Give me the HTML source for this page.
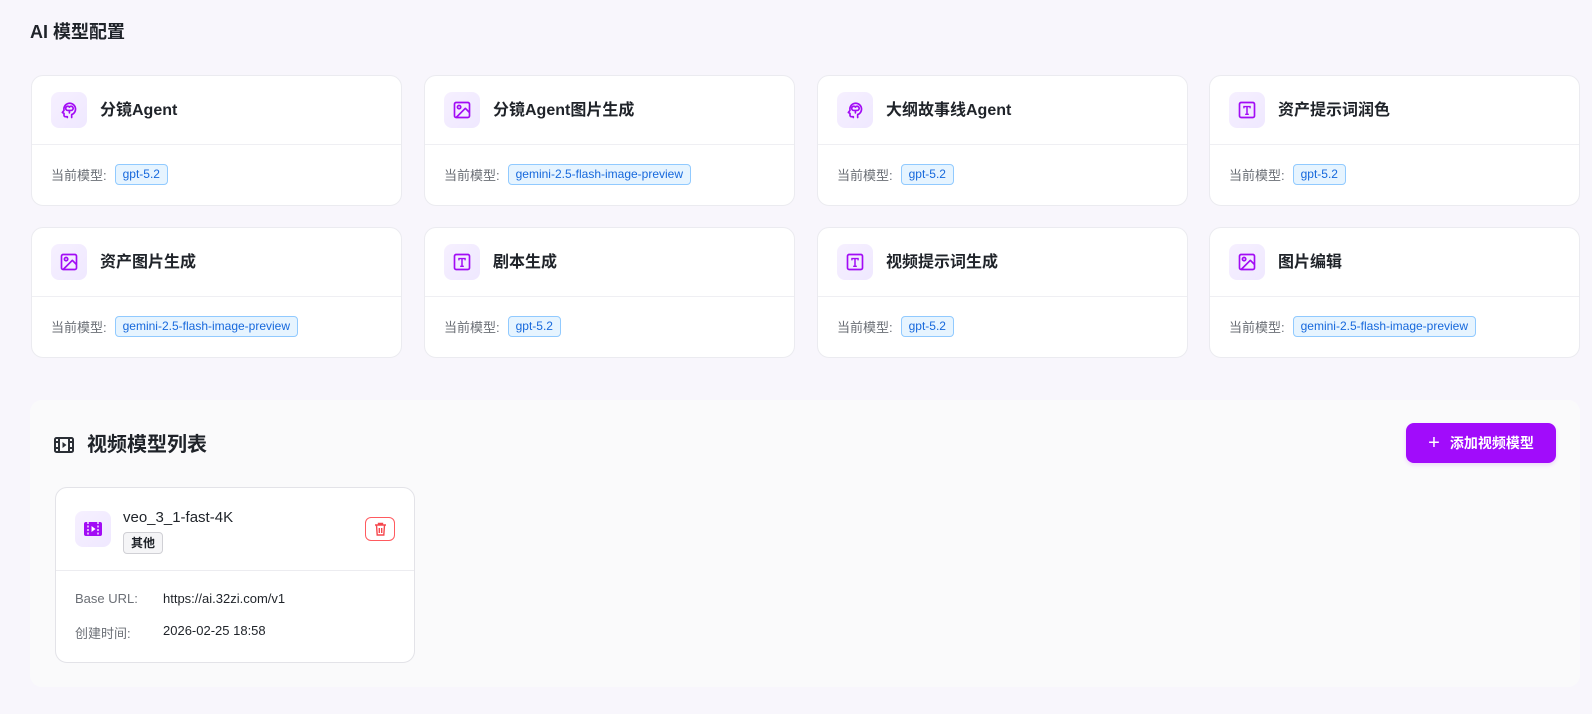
<!DOCTYPE html>
<html><head><meta charset="utf-8"><style>
*{box-sizing:border-box;margin:0;padding:0}
body{width:1592px;height:714px;background:#f8f6fc;font-family:"Liberation Sans","Noto Sans CJK SC",sans-serif;color:#1f2329;position:relative;overflow:hidden}
h1{position:absolute;left:30px;top:20px;font-size:18px;font-weight:700;line-height:24px}
.card{position:absolute;width:371px;height:131px;background:#fff;border:1px solid #ebebf0;border-radius:12px}
.hd{height:69px;border-bottom:1px solid #efeff3;position:relative}
.ic{position:absolute;left:19px;top:16px;width:36px;height:36px;border-radius:8px;background:linear-gradient(135deg,#f6f0ff,#efe8ff);display:flex;align-items:center;justify-content:center}
.tt{position:absolute;left:68px;top:24px;font-size:16px;font-weight:700;line-height:22px}
.ft{position:absolute;left:19px;top:88px;font-size:13px;color:#6b6f76;display:flex;align-items:center}
.tag{margin-left:8px;border:1px solid #91caff;background:#e6f4ff;color:#1668dc;font-size:12px;border-radius:4px;padding:0 7px;height:21px;line-height:19px}
.panel{position:absolute;left:30px;top:400px;width:1550px;height:287px;background:#fafafb;border-radius:12px}
</style></head><body>
<h1>AI 模型配置</h1>

<svg width="0" height="0" style="position:absolute"><defs>
<symbol id="brain" viewBox="0 0 24 24"><g fill="none" stroke="#a20cf5" stroke-width="2" stroke-linecap="round" stroke-linejoin="round"><path d="M15.2 21v-3.5a7 7 0 1 0-9.2-5.1L4 15l2 1v2.5a1.5 1.5 0 0 0 1.5 1.5H10v1"/><path d="M10.5 12.5a2.5 2.5 0 1 1 2-4 2.5 2.5 0 1 1 2 4h-4zM12.5 12.5v3"/></g></symbol>
<symbol id="img" viewBox="0 0 24 24"><g fill="none" stroke="#a20cf5" stroke-width="2" stroke-linejoin="round"><rect x="3" y="3" width="18" height="18" rx="2"/><circle cx="8.5" cy="8.5" r="2"/><path d="M21 15l-5-5L5 21"/></g></symbol>
<symbol id="txt" viewBox="0 0 24 24"><g fill="none" stroke="#a20cf5" stroke-width="2"><rect x="3" y="3" width="18" height="18" rx="2"/></g><path d="M7.5 7h9v3h-1.6V8.7h-2v7.6h1.3V18H9.8v-1.7h1.3V8.7h-2V10H7.5z" fill="#a20cf5"/></symbol>
</defs></svg>

<div class="card" style="left:31px;top:75px"><div class="hd"><div class="ic"><svg width="20" height="20"><use href="#brain"/></svg></div><div class="tt">分镜Agent</div></div><div class="ft">当前模型:<span class="tag">gpt-5.2</span></div></div>
<div class="card" style="left:424px;top:75px"><div class="hd"><div class="ic"><svg width="20" height="20"><use href="#img"/></svg></div><div class="tt">分镜Agent图片生成</div></div><div class="ft">当前模型:<span class="tag">gemini-2.5-flash-image-preview</span></div></div>
<div class="card" style="left:817px;top:75px"><div class="hd"><div class="ic"><svg width="20" height="20"><use href="#brain"/></svg></div><div class="tt">大纲故事线Agent</div></div><div class="ft">当前模型:<span class="tag">gpt-5.2</span></div></div>
<div class="card" style="left:1209px;top:75px"><div class="hd"><div class="ic"><svg width="20" height="20"><use href="#txt"/></svg></div><div class="tt">资产提示词润色</div></div><div class="ft">当前模型:<span class="tag">gpt-5.2</span></div></div>

<div class="card" style="left:31px;top:227px"><div class="hd"><div class="ic"><svg width="20" height="20"><use href="#img"/></svg></div><div class="tt">资产图片生成</div></div><div class="ft">当前模型:<span class="tag">gemini-2.5-flash-image-preview</span></div></div>
<div class="card" style="left:424px;top:227px"><div class="hd"><div class="ic"><svg width="20" height="20"><use href="#txt"/></svg></div><div class="tt">剧本生成</div></div><div class="ft">当前模型:<span class="tag">gpt-5.2</span></div></div>
<div class="card" style="left:817px;top:227px"><div class="hd"><div class="ic"><svg width="20" height="20"><use href="#txt"/></svg></div><div class="tt">视频提示词生成</div></div><div class="ft">当前模型:<span class="tag">gpt-5.2</span></div></div>
<div class="card" style="left:1209px;top:227px"><div class="hd"><div class="ic"><svg width="20" height="20"><use href="#img"/></svg></div><div class="tt">图片编辑</div></div><div class="ft">当前模型:<span class="tag">gemini-2.5-flash-image-preview</span></div></div>

<div class="panel">
  <svg style="position:absolute;left:24px;top:36px" width="20" height="18" viewBox="0 0 20 18"><g fill="none" stroke="#2b2f36" stroke-width="2"><rect x="1" y="2" width="18" height="14" rx="1.5"/><path d="M5 2v14M15 2v14M1 6h4M1 12h4M15 6h4M15 12h4"/></g><path d="M8.5 6v6l4-3z" fill="#2b2f36"/></svg>
  <div style="position:absolute;left:57px;top:32px;font-size:20px;font-weight:700;line-height:26px">视频模型列表</div>
  <div style="position:absolute;left:1376px;top:23px;width:150px;height:40px;background:#a10cfb;border-radius:8px;color:#fff;font-size:14px;font-weight:700;display:flex;align-items:center;justify-content:center;box-shadow:0 2px 4px rgba(161,12,251,.15)"><span style="font-weight:400;font-size:20px;margin-right:10px;line-height:20px">+</span>添加视频模型</div>
  <div style="position:absolute;left:25px;top:87px;width:360px;height:176px;background:#fff;border:1px solid #e3e3e8;border-radius:12px">
    <div style="height:83px;border-bottom:1px solid #ececf0;position:relative">
      <div class="ic" style="left:19px;top:23px"><svg width="18" height="14" viewBox="0 0 18 14"><rect width="18" height="14" rx="2" fill="#a20cf5"/><path d="M4 0v14M14 0v14" stroke="#fff" stroke-width="1.3" stroke-dasharray="2 1.5"/><path d="M7.5 4v6l4-3z" fill="#fff"/></svg></div>
      <div style="position:absolute;left:67px;top:20px;font-size:15px;line-height:20px">veo_3_1-fast-4K</div>
      <div style="position:absolute;left:67px;top:44px;height:22px;padding:0 7px;border:1px solid #d0d0d5;background:#f5f5f7;border-radius:4px;font-size:12px;font-weight:700;line-height:20px">其他</div>
      <div style="position:absolute;left:309px;top:29px;width:30px;height:24px;border:1px solid #ff5a5f;border-radius:6px;display:flex;align-items:center;justify-content:center"><svg width="13" height="14" viewBox="0 0 13 14"><g fill="none" stroke="#f5474d" stroke-width="1.4"><path d="M1 3h11M4.5 3V1.5h4V3M2.5 3l.7 10h6.6l.7-10M5.3 6v5M7.7 6v5"/></g></svg></div>
    </div>
    <div style="position:absolute;left:19px;top:103px;font-size:13px;color:#6b6f76">Base URL:</div>
    <div style="position:absolute;left:107px;top:103px;font-size:13px">https://ai.32zi.com/v1</div>
    <div style="position:absolute;left:19px;top:135px;font-size:13px;color:#6b6f76">创建时间:</div>
    <div style="position:absolute;left:107px;top:135px;font-size:13px">2026-02-25 18:58</div>
  </div>
</div>
</body></html>
